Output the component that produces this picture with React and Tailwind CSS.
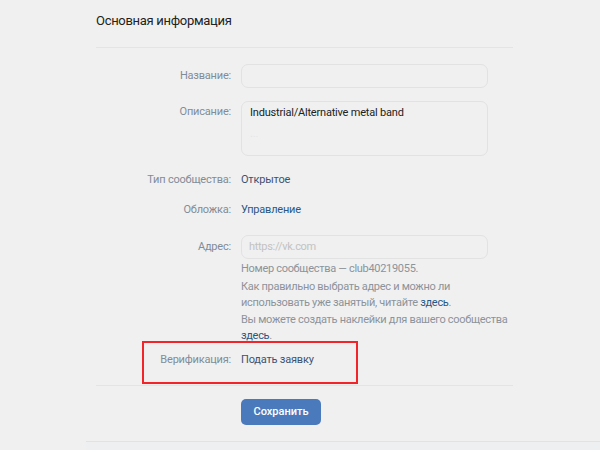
const FONT = { fontFamily: 'Roboto, "Open Sans", "Liberation Sans", sans-serif' }

function Label({ children }) {
  return <div className="w-[135px] shrink-0 text-right text-[11px] leading-[16px] tracking-[-0.2px] text-[#818c99]">{children}</div>
}

export default function App() {
  return (
    <div className="min-h-[450px] w-[600px] overflow-hidden bg-[#f0f0f0]" style={FONT}>
      <div className="ml-[86px] w-[427px]">
        <div className="ml-[10px] h-[48px] border-b border-[#e4e4e4] pt-[13px] text-[13px] leading-[16px] tracking-[-0.3px] text-[#222]">
          Основная информация
        </div>

        <div className="pl-[10px]">
          {/* Название */}
          <div className="mt-[16px] flex items-center gap-[10px]">
            <Label>Название:</Label>
            <div className="h-[24px] w-[247px] rounded-[7px] border border-[#e2e2e2] bg-[#f0f0f0]" />
          </div>

          {/* Описание */}
          <div className="mt-[13px] flex items-start gap-[10px]">
            <div className="pt-[3px]">
              <Label>Описание:</Label>
            </div>
            <div className="h-[55px] w-[247px] rounded-[7px] border border-[#e2e2e2] px-[8px] pt-[3px] text-[11px] leading-[16px] tracking-[-0.2px] text-[#222]">
              Industrial/Alternative metal band
              <div className="mt-[5px] text-[#e6e6e6]">...</div>
            </div>
          </div>

          {/* Тип сообщества */}
          <div className="mt-[16px] flex items-center gap-[10px]">
            <Label>Тип сообщества:</Label>
            <div className="text-[11px] leading-[16px] tracking-[-0.2px] text-[#3d5270]">Открытое</div>
          </div>

          {/* Обложка */}
          <div className="mt-[14px] flex items-center gap-[10px]">
            <Label>Обложка:</Label>
            <div className="text-[11px] leading-[16px] tracking-[-0.2px] text-[#2a5885]">Управление</div>
          </div>

          {/* Адрес */}
          <div className="mt-[17px] flex items-start gap-[10px]">
            <div className="pt-[4px]">
              <Label>Адрес:</Label>
            </div>
            <div className="w-[247px] text-[11px] leading-[16px] tracking-[-0.3px] text-[#8d939a]">
              <div className="flex h-[24px] items-center rounded-[7px] border border-[#e2e2e2] px-[7px] text-[#c2c2c2]">
                https://vk.com
              </div>
              <div className="mt-[2px]">Номер сообщества — club40219055.</div>
              <div className="mt-[2px]">
                Как правильно выбрать адрес и можно ли использовать уже занятый, читайте{' '}
                <span className="text-[#2a5885]">здесь</span>.
              </div>
              <div className="mt-[1px] w-[275px]">
                Вы можете создать наклейки для вашего сообщества <span className="text-[#2a5885]">здесь</span>.
              </div>
            </div>
          </div>
        </div>

        {/* Верификация */}
        <div className="relative ml-[10px] border-b border-[#e4e4e4] pt-[8px] pb-[17px]">
          <div className="flex items-center gap-[10px]">
            <Label>Верификация:</Label>
            <div className="text-[11px] leading-[16px] tracking-[-0.2px] text-[#3d5270]">Подать заявку</div>
          </div>
          <div className="absolute left-[46px] top-[-3px] h-[43px] w-[216px] border-2 border-[#f2252a]" />
        </div>

        <div className="pl-[155px] pt-[12px] pb-[16px]">
          <button className="h-[26px] w-[80px] rounded-[5px] bg-[#4a7abb] text-[11px] font-medium text-white">
            Сохранить
          </button>
        </div>
      </div>
      <div className="ml-[86px] h-[10px] w-[514px] border-t border-[#e2e2e2] bg-[#eeeff1]" />
    </div>
  )
}
